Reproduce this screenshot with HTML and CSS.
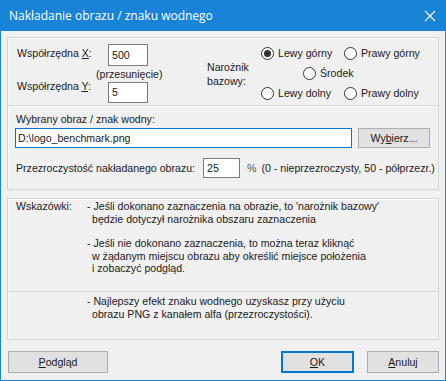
FILE: index.html
```html
<!DOCTYPE html>
<html>
<head>
    <title>Nakładanie obrazu / znaku wodnego</title>
    <link rel="stylesheet" href="styles.css">
</head>
<body>
    <div class="window">
        <div class="titlebar">
            <span class="title">Nakładanie obrazu / znaku wodnego</span>
            <svg class="close" width="12" height="12" viewBox="0 0 12 12">
                <path d="M1 1 L11 11 M11 1 L1 11" stroke="#fff" stroke-width="1.1" fill="none"/>
            </svg>
        </div>
        <div class="content">
            <div class="box box-pos">
                <div class="coords">
                    <span class="lbl lbl-x">Współrzędna <u>X</u>:</span>
                    <div class="edit edit-x">500</div>
                    <span class="hint">(przesunięcie)</span>
                    <span class="lbl lbl-y">Współrzędna <u>Y</u>:</span>
                    <div class="edit edit-y">5</div>
                </div>
                <div class="corner-lbl">Narożnik<br>bazowy:</div>
                <div class="radios">
                    <label class="radio"><span class="dot checked"></span>Lewy górny</label>
                    <label class="radio"><span class="dot"></span>Prawy górny</label>
                    <label class="radio mid"><span class="dot"></span>Środek</label>
                    <label class="radio"><span class="dot"></span>Lewy dolny</label>
                    <label class="radio"><span class="dot"></span>Prawy dolny</label>
                </div>
            </div>
            <div class="box box-file">
                <div class="file-lbl">Wybrany obraz / znak wodny:</div>
                <div class="file-row">
                    <div class="edit edit-file">D:\logo_benchmark.png</div>
                    <div class="btn btn-pick">Wy<u>b</u>ierz...</div>
                </div>
                <div class="alpha-row">
                    <span class="alpha-lbl">Przezroczystość nakładanego obrazu:</span>
                    <div class="edit edit-alpha">25</div>
                    <span class="pct">%</span>
                    <span class="alpha-note">(0 - nieprzezroczysty, 50 - półprzezr.)</span>
                </div>
            </div>
            <div class="box box-tips">
                <div class="tips-top">
                    <div class="tips-lbl">Wskazówki:</div>
                    <div class="tips">
                        <div class="para">
                            <div>- Jeśli dokonano zaznaczenia na obrazie, to 'narożnik bazowy'</div>
                            <div class="cont">będzie dotyczył narożnika obszaru zaznaczenia</div>
                        </div>
                        <div class="para">
                            <div>- Jeśli nie dokonano zaznaczenia, to można teraz kliknąć</div>
                            <div class="cont">w żądanym miejscu obrazu aby określić miejsce położenia</div>
                            <div class="cont">i zobaczyć podgląd.</div>
                        </div>
                    </div>
                </div>
                <div class="tips-bottom">
                    <div>- Najlepszy efekt znaku wodnego uzyskasz przy użyciu</div>
                    <div class="cont">obrazu PNG z kanałem alfa (przezroczystości).</div>
                </div>
            </div>
            <div class="buttons">
                <div class="btn btn-preview"><u>P</u>odgląd</div>
                <div class="btn btn-ok default"><u>O</u>K</div>
                <div class="btn btn-cancel"><u>A</u>nuluj</div>
            </div>
        </div>
    </div>
</body>
</html>
```

FILE: styles.css
```css
html, body {
    margin: 0;
    padding: 0;
}
body {
    width: 446px;
    height: 381px;
    overflow: hidden;
    font-family: "Liberation Sans", Arial, sans-serif;
    font-size: 10.6px;
    line-height: 13px;
    color: #1a1a1a;
}
.window {
    width: 446px;
    height: 381px;
    box-sizing: border-box;
    background-color: #f0f0f0;
    border: 1px solid #1883d7;
    border-top: none;
    display: flex;
    flex-direction: column;
}
.titlebar {
    height: 31px;
    margin: 0 -1px;
    background-color: #1883d7;
    display: flex;
    align-items: center;
    justify-content: space-between;
    padding: 0 10px 0 9px;
    flex-shrink: 0;
}
.title {
    color: #fff;
    font-family: "Open Sans", "Noto Sans", sans-serif;
    font-size: 12px;
    margin-top: -1px;
}
.close {
    display: block;
}
.content {
    flex: 1;
    padding: 6px 6px 7px 6px;
    display: flex;
    flex-direction: column;
}
.box {
    border: 1px solid #d5d5d5;
    box-shadow: inset 1px 1px 0 #fafafa;
    box-sizing: border-box;
}
.edit {
    background-color: #fff;
    border: 1px solid #7a7a7a;
    box-sizing: border-box;
    padding: 0 3px;
    display: flex;
    align-items: center;
}
.btn {
    background-color: #e1e1e1;
    border: 1px solid #adadad;
    box-sizing: border-box;
    display: flex;
    align-items: center;
    justify-content: center;
}
.btn.default {
    border-color: #0078d7;
    box-shadow: inset 0 0 0 1px #0078d7;
}

/* position box */
.box-pos {
    height: 69px;
    padding: 6px 0 0 9px;
    display: grid;
    grid-template-columns: 190px 54px auto;
}
.coords {
    display: grid;
    grid-template-columns: 91px 40px;
    grid-template-rows: 22px 16px 21px;
}
.lbl-x {
    align-self: start;
    margin-top: 3px;
}
.lbl-y {
    align-self: start;
    margin-top: -2px;
}
.edit-x {
    height: 22px;
}
.edit-y {
    height: 21px;
}
.hint {
    grid-column: 1 / -1;
    margin-left: 79px;
    align-self: center;
    white-space: nowrap;
}
.corner-lbl {
    align-self: center;
    line-height: 14px;
    margin-top: -2px;
}
.radios {
    display: grid;
    grid-template-columns: 83px 83px;
    grid-template-rows: 20px 20px 20px;
    margin-top: -1px;
}
.radio {
    display: flex;
    align-items: center;
    white-space: nowrap;
}
.radio.mid {
    grid-column: 1 / -1;
    padding-left: 42px;
}
.dot {
    width: 13px;
    height: 13px;
    box-sizing: border-box;
    border: 1px solid #333;
    border-radius: 50%;
    background-color: #fff;
    margin-right: 4px;
    display: flex;
    align-items: center;
    justify-content: center;
}
.dot.checked::after {
    content: "";
    width: 7px;
    height: 7px;
    border-radius: 50%;
    background-color: #333;
}

/* file box */
.box-file {
    height: 84px;
    border-top: none;
    padding: 7px 0 0 7px;
}
.file-lbl {
    margin-left: 1px;
}
.file-row {
    display: flex;
    gap: 6px;
    margin-top: 2px;
}
.edit-file {
    width: 337px;
    height: 20px;
    border-color: #0078d7;
    padding-left: 2px;
}
.btn-pick {
    width: 72px;
    height: 20px;
}
.alpha-row {
    display: flex;
    align-items: center;
    margin-top: 10px;
    white-space: nowrap;
}
.alpha-lbl {
    margin-left: 1px;
    width: 187px;
}
.edit-alpha {
    width: 37px;
    height: 20px;
}
.pct {
    margin-left: 7px;
    color: #555;
}
.alpha-note {
    margin-left: 5px;
}

/* tips box */
.box-tips {
    height: 142px;
    margin-top: 8px;
    display: flex;
    flex-direction: column;
}
.tips-top {
    display: grid;
    grid-template-columns: 71px auto;
    padding: 0 0 0 8px;
    height: 93px;
    box-sizing: border-box;
    border-bottom: 1px solid #d9d9d9;
}
.tips-lbl {
    padding-top: 1px;
}
.tips .para {
    padding-top: 1px;
    line-height: 12.5px;
}
.tips .para + .para {
    margin-top: 11px;
}
.cont {
    padding-left: 5px;
}
.tips-bottom {
    padding: 3px 0 0 79px;
    line-height: 13px;
}
.tips-top .tips {
    padding-top: 0;
}

/* buttons */
.buttons {
    display: flex;
    margin-top: 11px;
}
.buttons .btn {
    height: 22px;
}
.btn-preview {
    width: 100px;
    margin-left: 1px;
}
.btn-ok {
    width: 73px;
    margin-left: auto;
}
.btn-cancel {
    width: 72px;
    margin-left: 13px;
    margin-right: 0;
}
```
